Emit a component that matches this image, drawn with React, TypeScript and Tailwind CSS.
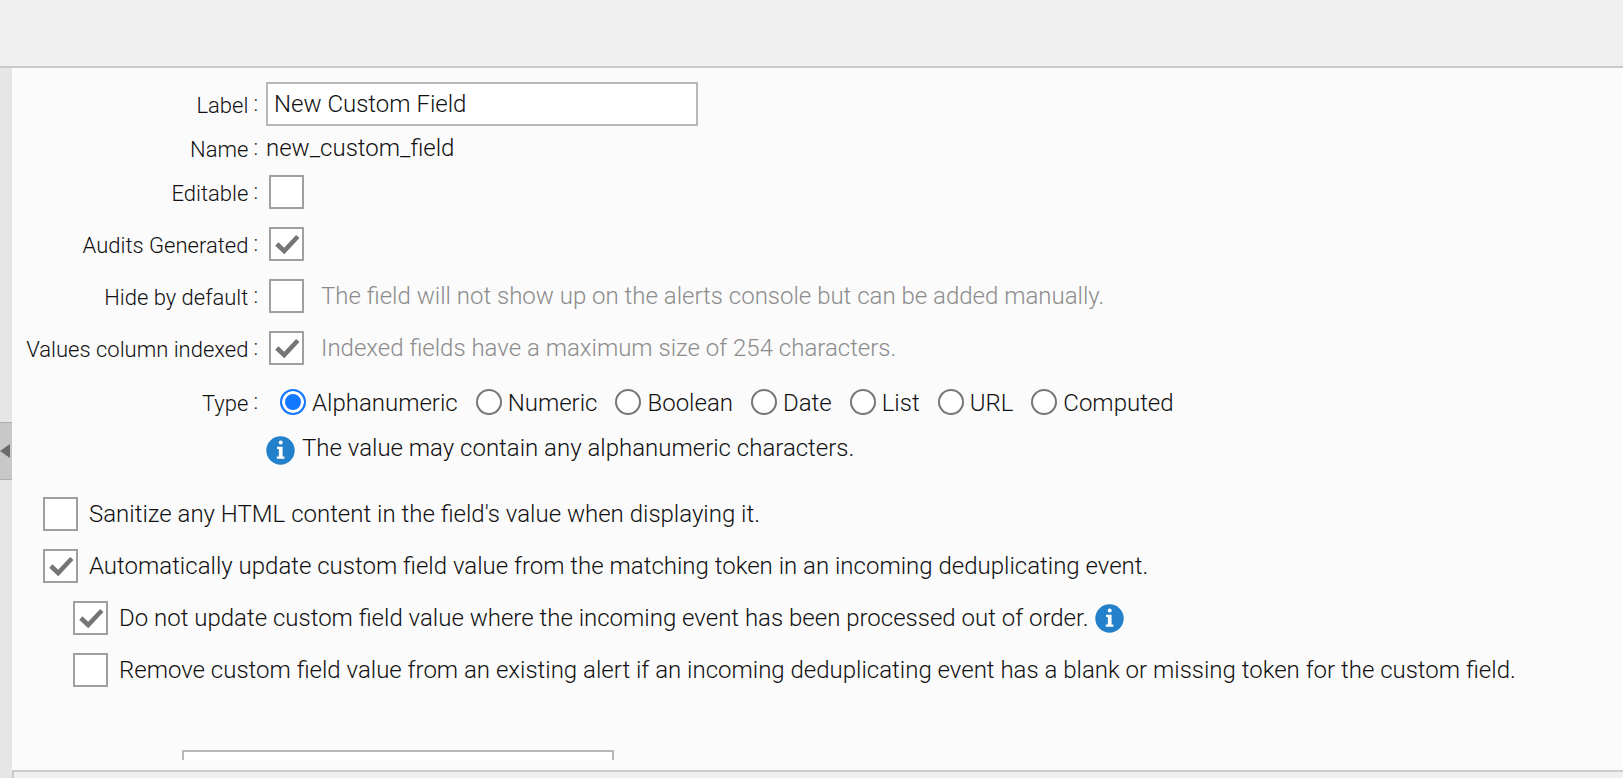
import { useState } from "react";
import type { ReactNode } from "react";

const TYPES = ["Alphanumeric", "Numeric", "Boolean", "Date", "List", "URL", "Computed"];

function InfoIcon() {
  return (
    <svg viewBox="0 0 29 29" className="size-[29px] shrink-0" aria-hidden="true">
      <circle cx="14.5" cy="14.5" r="14.2" fill="#2381cb" />
      <circle cx="14.7" cy="6.6" r="2" fill="#fff" />
      <path d="M11 10.8h5.6v9.7h1.8v2.2h-7.6v-2.2h2v-7.5H11z" fill="#fff" />
    </svg>
  );
}

function Checkbox({ id, defaultChecked }: { id: string; defaultChecked?: boolean }) {
  return (
    <span className="grid h-[34px] w-[35px] shrink-0">
      <input
        id={id}
        type="checkbox"
        defaultChecked={defaultChecked}
        className="peer col-start-1 row-start-1 size-full appearance-none border-2 border-[#9f9f9f] bg-white"
      />
      <svg
        viewBox="0 0 35 34"
        className="pointer-events-none invisible col-start-1 row-start-1 size-full peer-checked:visible"
        fill="none"
        stroke="#757575"
        strokeWidth="4.6"
        aria-hidden="true"
      >
        <path d="M7.8 17l7.4 7L28.8 9.5" />
      </svg>
    </span>
  );
}

type FieldProps = {
  label: string;
  htmlFor?: string;
  rowClass?: string;
  children: ReactNode;
};

function Field({ label, htmlFor, rowClass = "h-[52px]", children }: FieldProps) {
  const Tag = htmlFor ? "label" : "span";
  return (
    <div className={`flex items-center ${rowClass}`}>
      <Tag htmlFor={htmlFor} className="flex w-[254px] shrink-0 justify-end gap-[5px] pr-2 text-[22px]">
        <span className="pt-1">{label}</span>
        <span className="pt-0.5">:</span>
      </Tag>
      {children}
    </div>
  );
}

type OptionProps = {
  id: string;
  label: string;
  checked?: boolean;
  nested?: boolean;
  info?: boolean;
};

function Option({ id, label, checked, nested, info }: OptionProps) {
  return (
    <div className={`flex h-[52px] items-center ${nested ? "pl-[61px]" : "pl-[31px]"}`}>
      <Checkbox id={id} defaultChecked={checked} />
      <label htmlFor={id} className="pl-[11px]">
        {label}
      </label>
      {info && (
        <span className="pl-[7px]">
          <InfoIcon />
        </span>
      )}
    </div>
  );
}

export default function App() {
  const [label, setLabel] = useState("New Custom Field");
  const [type, setType] = useState("Alphanumeric");
  const name = label.trim().toLowerCase().replace(/\s+/g, "_");

  return (
    <div className="flex h-screen flex-col overflow-hidden bg-[#fbfbfb] font-[Roboto,sans-serif] text-2xl leading-7 font-light whitespace-nowrap text-[#111]">
      <header className="h-[68px] shrink-0 border-b-2 border-[#cbcbcb] bg-[#efefef]" />
      <div className="flex min-h-0 flex-1">
        <aside className="flex w-3 shrink-0 flex-col bg-[#e6e6e6] pt-[354px]">
          <button
            type="button"
            aria-label="Collapse panel"
            className="flex h-[58px] items-center border-y border-[#adb1b1] bg-[#c8c8c8]"
          >
            <svg viewBox="0 0 10 14" className="h-3.5 w-2.5" aria-hidden="true">
              <path d="M10 0v14L0 7z" fill="#6b6b6b" />
            </svg>
          </button>
        </aside>

        <main className="flex min-w-0 flex-1 flex-col">
          <form className="min-h-0 flex-1 overflow-hidden pt-3.5">
            <Field label="Label" htmlFor="label" rowClass="h-11">
              <input
                id="label"
                type="text"
                value={label}
                onChange={(e) => setLabel(e.target.value)}
                className="h-11 w-[432px] border-2 border-[#b8b8b8] bg-white px-1.5 outline-none"
              />
            </Field>
            <Field label="Name" rowClass="h-11">
              <span>{name}</span>
            </Field>
            <div className="-mt-1">
              <Field label="Editable" htmlFor="editable">
                <span className="pl-[3px]">
                  <Checkbox id="editable" />
                </span>
              </Field>
              <Field label="Audits Generated" htmlFor="audits">
                <span className="pl-[3px]">
                  <Checkbox id="audits" defaultChecked />
                </span>
              </Field>
              <Field label="Hide by default" htmlFor="hide">
                <span className="pl-[3px]">
                  <Checkbox id="hide" />
                </span>
                <span className="pl-[17px] text-[#8c8c8c]">
                  The field will not show up on the alerts console but can be added manually.
                </span>
              </Field>
              <Field label="Values column indexed" htmlFor="indexed">
                <span className="pl-[3px]">
                  <Checkbox id="indexed" defaultChecked />
                </span>
                <span className="pl-[17px] text-[#8c8c8c]">Indexed fields have a maximum size of 254 characters.</span>
              </Field>
            </div>

            <Field label="Type" rowClass="h-14">
              <div role="radiogroup" aria-label="Type" className="flex gap-[18px] pl-3.5">
                {TYPES.map((t) => (
                  <label key={t} className="flex items-center gap-1.5">
                    <input
                      type="radio"
                      name="type"
                      value={t}
                      checked={type === t}
                      onChange={() => setType(t)}
                      className="size-[26px] appearance-none rounded-full border-2 border-[#767676] bg-white checked:border-[#1477ff] checked:bg-[#1477ff] checked:shadow-[inset_0_0_0_3px_white]"
                    />
                    <span className="pt-0.5">{t}</span>
                  </label>
                ))}
              </div>
            </Field>
            <p className="flex h-10 items-center gap-[7px] pl-[254px]">
              <InfoIcon />
              <span className="pb-1">The value may contain any alphanumeric characters.</span>
            </p>

            <div className="pt-[18px]">
              <Option id="sanitize" label="Sanitize any HTML content in the field's value when displaying it." />
              <Option
                id="auto-update"
                label="Automatically update custom field value from the matching token in an incoming deduplicating event."
                checked
              />
              <Option
                id="skip-unordered"
                label="Do not update custom field value where the incoming event has been processed out of order."
                checked
                nested
                info
              />
              <Option
                id="remove-blank"
                label="Remove custom field value from an existing alert if an incoming deduplicating event has a blank or missing token for the custom field."
                nested
              />
            </div>

            <div className="pt-[54px] pl-[170px]">
              <input
                type="text"
                aria-label="Default value"
                className="block h-11 w-[432px] border-2 border-[#b8b8b8] bg-white px-1.5 outline-none"
              />
            </div>
          </form>
          <footer className="mt-2.5 h-2 shrink-0 border-t-2 border-l-2 border-[#cbcbcb] bg-[#efefef]" />
        </main>
      </div>
    </div>
  );
}
